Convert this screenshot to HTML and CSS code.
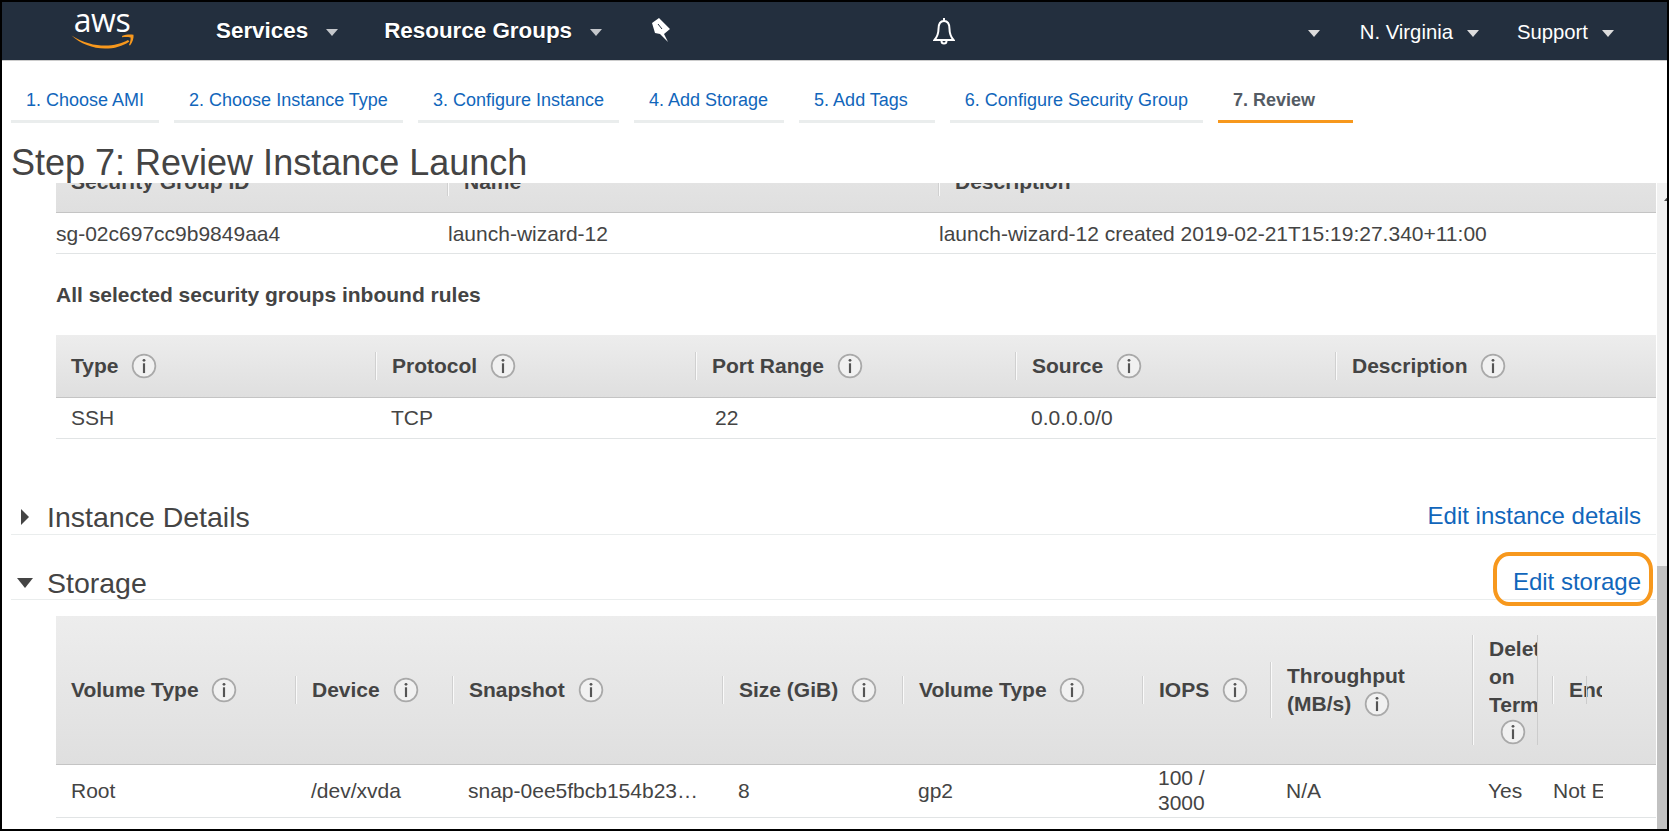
FILE: index.html
```html
<!doctype html>
<html lang="en">
<head>
    <meta charset="UTF-8">
    <title>Step 7: Review Instance Launch</title>
    <link rel="stylesheet" href="styles.css">
</head>
<body>
    <svg class="defs" width="0" height="0">
        <symbol id="info" viewBox="0 0 24 24">
            <circle cx="12" cy="12" r="10.5" fill="#f1f1f1" stroke="#a9a9a9" stroke-width="1.6"/>
            <circle cx="12" cy="6.8" r="1.3" fill="#555"/>
            <rect x="11" y="9.5" width="2" height="9" fill="#555"/>
        </symbol>
    </svg>
    <div class="frame">
        <header class="topbar">
            <div class="logo">
                <span class="logo-text">aws</span>
                <svg class="logo-smile" width="64" height="16" viewBox="0 0 64 16">
                    <path fill="#f7981d" d="M0.5 2.5 C12 10 24 12.6 34 12.6 C43 12.6 51 10.5 57 7 L58.4 8.4 C52 13 43 15.6 34 15.6 C22 15.6 9 10.5 0.5 2.5Z"/>
                    <path fill="#f7981d" d="M51 3 C55 1.4 59 1.2 62.5 1.8 C63 5 61.5 9.5 59 12.5 L58 12 C59 9.5 59.8 7 59.6 4.4 C57 4 54 4 51.2 4.2Z"/>
                </svg>
            </div>
            <span class="nav-item services">Services</span>
            <span class="caret caret-bold"></span>
            <span class="nav-item groups">Resource Groups</span>
            <span class="caret caret-bold"></span>
            <svg class="pin" width="22" height="26" viewBox="0 0 22 26">
                <path fill="#fff" d="M2 6 L9 1 L20 12 L14 17 L18 25 L10 17 L5 16Z"/>
                <path stroke="#232f3e" stroke-width="1" d="M8 7 L12 12"/>
            </svg>
            <svg class="bell" width="22" height="28" viewBox="0 0 22 28">
                <path fill="none" stroke="#fff" stroke-width="2" d="M11 4 C6 4 5.5 8 5.5 12 C5.5 17 4 20 1.5 23 H20.5 C18 20 16.5 17 16.5 12 C16.5 8 16 4 11 4Z"/>
                <path fill="none" stroke="#fff" stroke-width="2" d="M11 4 V1 M8.5 24 a2.5 2.5 0 0 0 5 0"/>
            </svg>
            <div class="nav-right">
                <span class="caret"></span>
                <span class="nav-link">N. Virginia</span>
                <span class="caret"></span>
                <span class="nav-link support">Support</span>
                <span class="caret"></span>
            </div>
        </header>

        <nav class="tabs">
            <a class="tab">1. Choose AMI</a>
            <a class="tab">2. Choose Instance Type</a>
            <a class="tab">3. Configure Instance</a>
            <a class="tab tab-storage">4. Add Storage</a>
            <a class="tab tab-tags">5. Add Tags</a>
            <a class="tab">6. Configure Security Group</a>
            <a class="tab active">7. Review</a>
        </nav>

        <h1 class="title">Step 7: Review Instance Launch</h1>

        <div class="scroll-area">
            <main class="content">
                <div class="thead sg-head sg-cols">
                    <div class="th">Security Group ID</div>
                    <div class="th">Name</div>
                    <div class="th">Description</div>
                </div>
                <div class="row sg-row sg-cols">
                    <div>sg-02c697cc9b9849aa4</div>
                    <div>launch-wizard-12</div>
                    <div>launch-wizard-12 created 2019-02-21T15:19:27.340+11:00</div>
                </div>

                <h3 class="rules-title">All selected security groups inbound rules</h3>

                <div class="thead rules-head rules-cols">
                    <div class="th">Type <svg class="i"><use href="#info"/></svg></div>
                    <div class="th">Protocol <svg class="i"><use href="#info"/></svg></div>
                    <div class="th">Port Range <svg class="i"><use href="#info"/></svg></div>
                    <div class="th">Source <svg class="i"><use href="#info"/></svg></div>
                    <div class="th">Description <svg class="i"><use href="#info"/></svg></div>
                </div>
                <div class="row rules-row rules-cols">
                    <div>SSH</div>
                    <div>TCP</div>
                    <div class="port">22</div>
                    <div>0.0.0.0/0</div>
                    <div></div>
                </div>

                <section class="section instance">
                    <div class="section-name"><span class="toggle"><span class="tri-right"></span></span>Instance Details</div>
                    <a class="edit-link">Edit instance details</a>
                </section>
                <section class="section storage">
                    <div class="section-name"><span class="toggle"><span class="tri-down"></span></span>Storage</div>
                    <a class="edit-link">Edit storage</a>
                    <span class="ring"></span>
                </section>

                <div class="thead storage-head storage-cols">
                    <div class="th">Volume Type <svg class="i"><use href="#info"/></svg></div>
                    <div class="th">Device <svg class="i"><use href="#info"/></svg></div>
                    <div class="th">Snapshot <svg class="i"><use href="#info"/></svg></div>
                    <div class="th">Size (GiB) <svg class="i"><use href="#info"/></svg></div>
                    <div class="th">Volume Type <svg class="i"><use href="#info"/></svg></div>
                    <div class="th">IOPS <svg class="i"><use href="#info"/></svg></div>
                    <div class="th">Throughput<br>(MB/s) <svg class="i"><use href="#info"/></svg></div>
                    <div class="th th-delete"><span class="clip">Delete<br>on<br>Termination</span><svg class="i"><use href="#info"/></svg></div>
                    <div class="th th-enc"><span class="clip">Encrypted</span></div>
                </div>
                <div class="row storage-row storage-cols">
                    <div>Root</div>
                    <div>/dev/xvda</div>
                    <div>snap-0ee5fbcb154b23…</div>
                    <div>8</div>
                    <div>gp2</div>
                    <div>100 /<br>3000</div>
                    <div>N/A</div>
                    <div>Yes</div>
                    <div class="clip-cell">Not Encrypted</div>
                </div>
            </main>
            <aside class="scrollbar">
                <span class="arrow"></span>
                <span class="thumb"></span>
            </aside>
        </div>
    </div>
</body>
</html>
```

FILE: styles.css
```css
* {
    box-sizing: border-box;
}
body {
    margin: 0;
    background: #000;
    font-family: "Liberation Sans", Arial, sans-serif;
    color: #444;
}
.defs {
    position: absolute;
}
.frame {
    width: 1669px;
    height: 831px;
    border: 2px solid #000;
    background: #fff;
    overflow: hidden;
    display: flex;
    flex-direction: column;
}

/* top bar */
.topbar {
    height: 59px;
    flex: none;
    background: #232f3e;
    border-bottom: 1px solid #ccc;
    display: flex;
    align-items: center;
    padding-left: 68px;
    color: #fff;
}
.logo {
    width: 64px;
    height: 50px;
    position: relative;
}
.logo-text {
    display: block;
    text-align: center;
    font-family: "Open Sans", sans-serif;
    font-size: 32px;
    line-height: 30px;
    margin-top: -1px;
    letter-spacing: -0.5px;
}
.logo-smile {
    position: absolute;
    left: 1px;
    top: 27px;
}
.nav-item {
    font-size: 22.4px;
    font-weight: bold;
    text-shadow: 0 1px 1px rgba(0, 0, 0, 0.6);
    margin-right: 18px;
}
.services {
    margin-left: 82px;
}
.groups {
    margin-left: 46px;
}
.caret {
    width: 0;
    height: 0;
    border-left: 6px solid transparent;
    border-right: 6px solid transparent;
    border-top: 7px solid #ddd;
    margin-top: 2px;
}
.caret-bold {
    border-top-color: #c4c7cb;
}
.pin {
    margin-left: 48px;
    margin-top: -2px;
}
.bell {
    margin-left: 261px;
    margin-top: 0;
}
.nav-right {
    margin-left: auto;
    padding-right: 53px;
    display: flex;
    align-items: center;
    padding-top: 3px;
}
.nav-link {
    font-size: 20.3px;
    margin: 0 14px 0 40px;
}
.nav-link.support {
    margin-left: 38px;
}

/* wizard tabs */
.tabs {
    display: flex;
    gap: 15px;
    padding: 25px 0 0 9px;
    flex: none;
}
.tab {
    font-size: 18px;
    line-height: 28px;
    padding: 0 15px 6px;
    color: #1166bb;
    border-bottom: 3px solid #eaeded;
}
.tab-storage {
    padding-right: 16px;
}
.tab-tags {
    padding-right: 27px;
}
.tab.active {
    color: #545b64;
    font-weight: bold;
    border-bottom-color: #f7981d;
    padding-right: 38px;
}
.title {
    margin: 0;
    padding: 20px 0 0 9px;
    height: 60px;
    flex: none;
    font-size: 36px;
    line-height: 40px;
    font-weight: normal;
    overflow: hidden;
    position: relative;
    z-index: 1;
    background: #fff;
}

/* scrolled area */
.scroll-area {
    flex: 1;
    min-height: 0;
    display: flex;
}
.content {
    flex: 1;
    min-width: 0;
    overflow: hidden;
    padding-left: 54px;
    margin-right: 1px;
}
.scrollbar {
    width: 10px;
    background: #f1f1f1;
    display: flex;
    flex-direction: column;
    overflow: hidden;
    flex: none;
}
.arrow {
    width: 12px;
    height: 0;
    margin: 12px 0 0 7px;
    border-left: 5px solid transparent;
    border-right: 5px solid transparent;
    border-bottom: 6px solid #505050;
}
.thumb {
    margin-top: auto;
    height: 263px;
    background: #c1c1c1;
}

/* tables */
.thead {
    display: grid;
    align-items: center;
    background: linear-gradient(#ededed, #dfdfdf);
    border-bottom: 1px solid #c4c4c4;
    font-size: 21px;
    line-height: 28px;
    font-weight: bold;
}
.th {
    padding-left: 15px;
    border-left: 1px solid #fafafa;
    box-shadow: -1px 0 0 #d0d0d0;
    display: block;
    white-space: nowrap;
}
.th:first-child {
    border-left: 0;
    box-shadow: none;
}
.i {
    width: 26px;
    height: 26px;
    vertical-align: -6px;
    margin-left: 7px;
}
.row {
    display: grid;
    align-items: center;
    font-size: 21px;
    line-height: 25px;
    border-bottom: 1px solid #e1e4e5;
}
.sg-cols {
    grid-template-columns: 392px 491px 717px;
}
.sg-head {
    height: 30px;
    background: linear-gradient(#e3e3e3, #dfdfdf);
    align-items: start;
    overflow: hidden;
}
.sg-head .th {
    margin-top: -15px;
}
.sg-row {
    height: 41px;
}
.rules-title {
    margin: 0;
    padding: 29px 0 28px;
    font-size: 21px;
    line-height: 24px;
    font-weight: bold;
}
.rules-cols {
    grid-template-columns: 320px 320px 320px 320px 320px;
}
.rules-head {
    height: 63px;
}
.rules-row {
    height: 41px;
    padding: 0 0 2px 15px;
}
.port {
    padding-left: 4px;
}

/* collapsible sections */
.section {
    position: relative;
    margin-left: -45px;
    display: flex;
    justify-content: space-between;
    align-items: center;
    padding-right: 15px;
    border-bottom: 1px solid #eaeded;
}
.instance {
    height: 96px;
    padding-top: 58px;
}
.storage {
    height: 65px;
    padding-top: 30px;
    margin-bottom: 16px;
}
.section-name {
    font-size: 28.5px;
    line-height: 34px;
    padding-top: 2px;
    display: flex;
    align-items: center;
}
.toggle {
    width: 36px;
    display: flex;
    justify-content: center;
    padding-right: 8px;
}
.tri-right {
    border-top: 8px solid transparent;
    border-bottom: 8px solid transparent;
    border-left: 8px solid #444;
}
.tri-down {
    border-left: 8px solid transparent;
    border-right: 8px solid transparent;
    border-top: 10px solid #444;
}
.edit-link {
    font-size: 24px;
    line-height: 30px;
    color: #1166bb;
}
.ring {
    position: absolute;
    left: 1482px;
    top: 17px;
    width: 160px;
    height: 54px;
    border: 4px solid #f7981d;
    border-radius: 16px / 18px;
}

/* storage table */
.storage-cols {
    grid-template-columns: 240px 157px 270px 180px 240px 128px 202px 80px 129px;
}
.storage-head {
    height: 149px;
}
.storage-head .th-delete {
    white-space: normal;
    width: 65px;
    overflow: hidden;
    border-right: 1px solid #ccc;
}
.th-delete .i {
    margin: 0 0 0 11px;
    display: block;
}
.clip {
    display: block;
    overflow: hidden;
}
.th-enc {
    width: 49px;
    overflow: hidden;
    position: relative;
}
.th-enc::after {
    content: "";
    position: absolute;
    left: 32px;
    top: 0;
    bottom: 0;
    width: 1px;
    background: #ccc;
}
.storage-row {
    height: 53px;
    padding: 0 0 2px 15px;
}
.clip-cell {
    white-space: nowrap;
    overflow: hidden;
    width: 50px;
    margin-left: -15px;
}
```
